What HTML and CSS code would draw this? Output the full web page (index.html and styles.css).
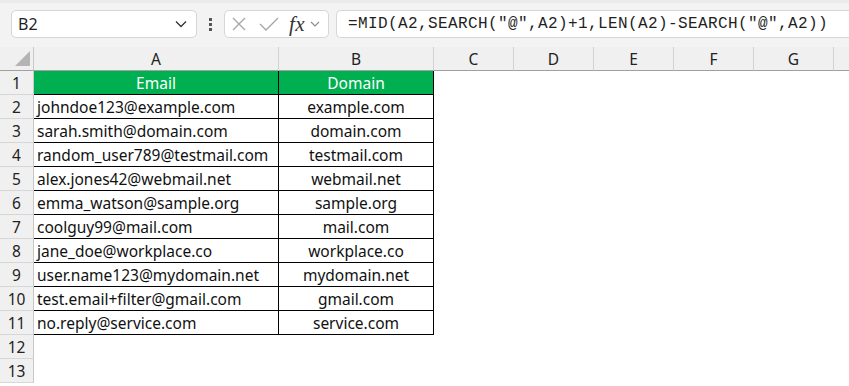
FILE: index.html
```html
<!DOCTYPE html>
<html lang="en">
<head>
  <meta charset="UTF-8" />
  <title>Extract Domain</title>
  <link rel="stylesheet" href="styles.css">
</head>
<body>

  <!-- Formula bar -->
  <div class="formula-bar">
    <div class="name-box">
      <span>B2</span>
      <svg class="chev" width="12" height="8" viewBox="0 0 12 8"><path d="M1 1.5 L6 6.5 L11 1.5" fill="none" stroke="#333" stroke-width="1.3"/></svg>
    </div>
    <div class="grip"><i></i><i></i><i></i></div>
    <div class="fx-box">
      <svg width="14" height="14" viewBox="0 0 14 14"><path d="M1 1 L13 13 M13 1 L1 13" stroke="#a6a6a6" stroke-width="1.3"/></svg>
      <svg width="20" height="14" viewBox="0 0 20 14"><path d="M1 7 L7 13 L19 1" fill="none" stroke="#a6a6a6" stroke-width="1.3"/></svg>
      <span class="fx">fx</span>
      <svg width="10" height="6" viewBox="0 0 10 6"><path d="M1 1 L5 5 L9 1" fill="none" stroke="#8a8a8a" stroke-width="1.1"/></svg>
    </div>
    <div class="formula">=MID(A2,SEARCH("@",A2)+1,LEN(A2)-SEARCH("@",A2))</div>
  </div>

  <!-- Sheet grid -->
  <div class="sheet">
    <div class="corner"><div class="tri"></div></div>
    <div class="col-head">A</div>
    <div class="col-head">B</div>
    <div class="col-head">C</div>
    <div class="col-head">D</div>
    <div class="col-head">E</div>
    <div class="col-head">F</div>
    <div class="col-head">G</div>
    <div class="col-head last"></div>

    <div class="row-head">1</div>
    <div class="cell title">Email</div>
    <div class="cell title">Domain</div>
    <div class="blank"></div><div class="blank"></div><div class="blank"></div><div class="blank"></div><div class="blank"></div><div class="blank"></div>
  </div>

  <script>
    const rows = [
      ["johndoe123@example.com", "example.com"],
      ["sarah.smith@domain.com", "domain.com"],
      ["random_user789@testmail.com", "testmail.com"],
      ["alex.jones42@webmail.net", "webmail.net"],
      ["emma_watson@sample.org", "sample.org"],
      ["coolguy99@mail.com", "mail.com"],
      ["jane_doe@workplace.co", "workplace.co"],
      ["user.name123@mydomain.net", "mydomain.net"],
      ["test.email+filter@gmail.com", "gmail.com"],
      ["no.reply@service.com", "service.com"]
    ];

    const sheet = document.querySelector(".sheet");
    let html = "";
    rows.forEach((r, i) => {
      html += `<div class="row-head">${i + 2}</div>`;
      html += `<div class="cell email">${r[0]}</div>`;
      html += `<div class="cell domain">${r[1]}</div>`;
      html += `<div class="blank"></div>`.repeat(6);
    });
    for (let n = 12; n <= 13; n++) {
      html += `<div class="row-head">${n}</div>`;
      html += `<div class="blank"></div>`.repeat(8);
    }
    sheet.insertAdjacentHTML("beforeend", html);
  </script>

</body>
</html>
```

FILE: styles.css
```css
* { box-sizing: border-box; }

body {
  margin: 0;
  background: #fff;
  font-family: 'Noto Sans', 'Open Sans', sans-serif;
  color: #1f1f1f;
  overflow: hidden;
}

/* ---------- formula bar ---------- */
.formula-bar {
  height: 47px;
  background: #f3f3f3;
  border-top: 3px solid #ebebeb;
  display: flex;
  align-items: center;
  padding: 0 0 2px 11px;
}

.name-box {
  width: 186px;
  height: 28px;
  background: #fff;
  border: 1px solid #d6d6d6;
  border-radius: 5px;
  display: flex;
  align-items: center;
  justify-content: space-between;
  padding: 0 9px 0 6px;
  font-size: 16px;
  color: #1f1f1f;
}

.grip {
  width: 27px;
  display: flex;
  flex-direction: column;
  align-items: center;
  gap: 2px;
}

.grip i {
  display: block;
  width: 3px;
  height: 3px;
  background: #555;
}

.fx-box {
  width: 105px;
  height: 28px;
  background: #fff;
  border: 1px solid #d6d6d6;
  border-radius: 5px;
  display: flex;
  align-items: center;
  padding: 0 5px 0 7px;
}

.fx-box svg:nth-child(1) { margin-right: 13px; }
.fx-box svg:nth-child(2) { margin-right: 10px; }

.fx {
  font-family: 'Liberation Serif', serif;
  font-style: italic;
  font-size: 21px;
  color: #333;
  margin-right: 5px;
  line-height: 1;
  letter-spacing: 0.5px;
}

.formula {
  flex: 1;
  height: 28px;
  margin-left: 7px;
  background: #fff;
  border: 1px solid #d6d6d6;
  border-right: none;
  border-radius: 5px 0 0 5px;
  display: flex;
  align-items: center;
  padding-left: 11px;
  font-family: 'Liberation Mono', monospace;
  font-size: 16px;
  letter-spacing: 0.4px;
  color: #1f1f1f;
  white-space: nowrap;
  overflow: hidden;
}

/* ---------- sheet ---------- */
.sheet {
  display: grid;
  grid-template-columns: 34px 245px 155px 80px 80px 80px 80px 80px 1fr;
  grid-auto-rows: 24px;
  font-size: 15.5px;
}

.corner,
.col-head {
  background: #f0f0f0;
  border-bottom: 1px solid #a0a0a0;
}

.corner {
  border-right: 1px solid #c8c8c8;
  position: relative;
}

.tri {
  position: absolute;
  right: 3px;
  bottom: 4px;
  width: 0;
  height: 0;
  border-left: 15px solid transparent;
  border-bottom: 15px solid #b4b4b4;
}

.col-head {
  border-right: 1px solid #d2d2d2;
  display: flex;
  align-items: center;
  justify-content: center;
  color: #222;
}

.col-head.last { border-right: none; }

.row-head {
  background: #f0f0f0;
  border-right: 1px solid #c8c8c8;
  border-bottom: 1px solid #d6d6d6;
  display: flex;
  align-items: center;
  justify-content: center;
  color: #222;
}

.cell {
  border-right: 1px solid #000;
  border-bottom: 1px solid #000;
  display: flex;
  align-items: center;
  white-space: nowrap;
  overflow: hidden;
  color: #111;
}

.cell.title {
  background: #00b050;
  color: #fff;
  justify-content: center;
}

.cell.email { padding-left: 3px; }

.cell.domain { justify-content: center; }
```
